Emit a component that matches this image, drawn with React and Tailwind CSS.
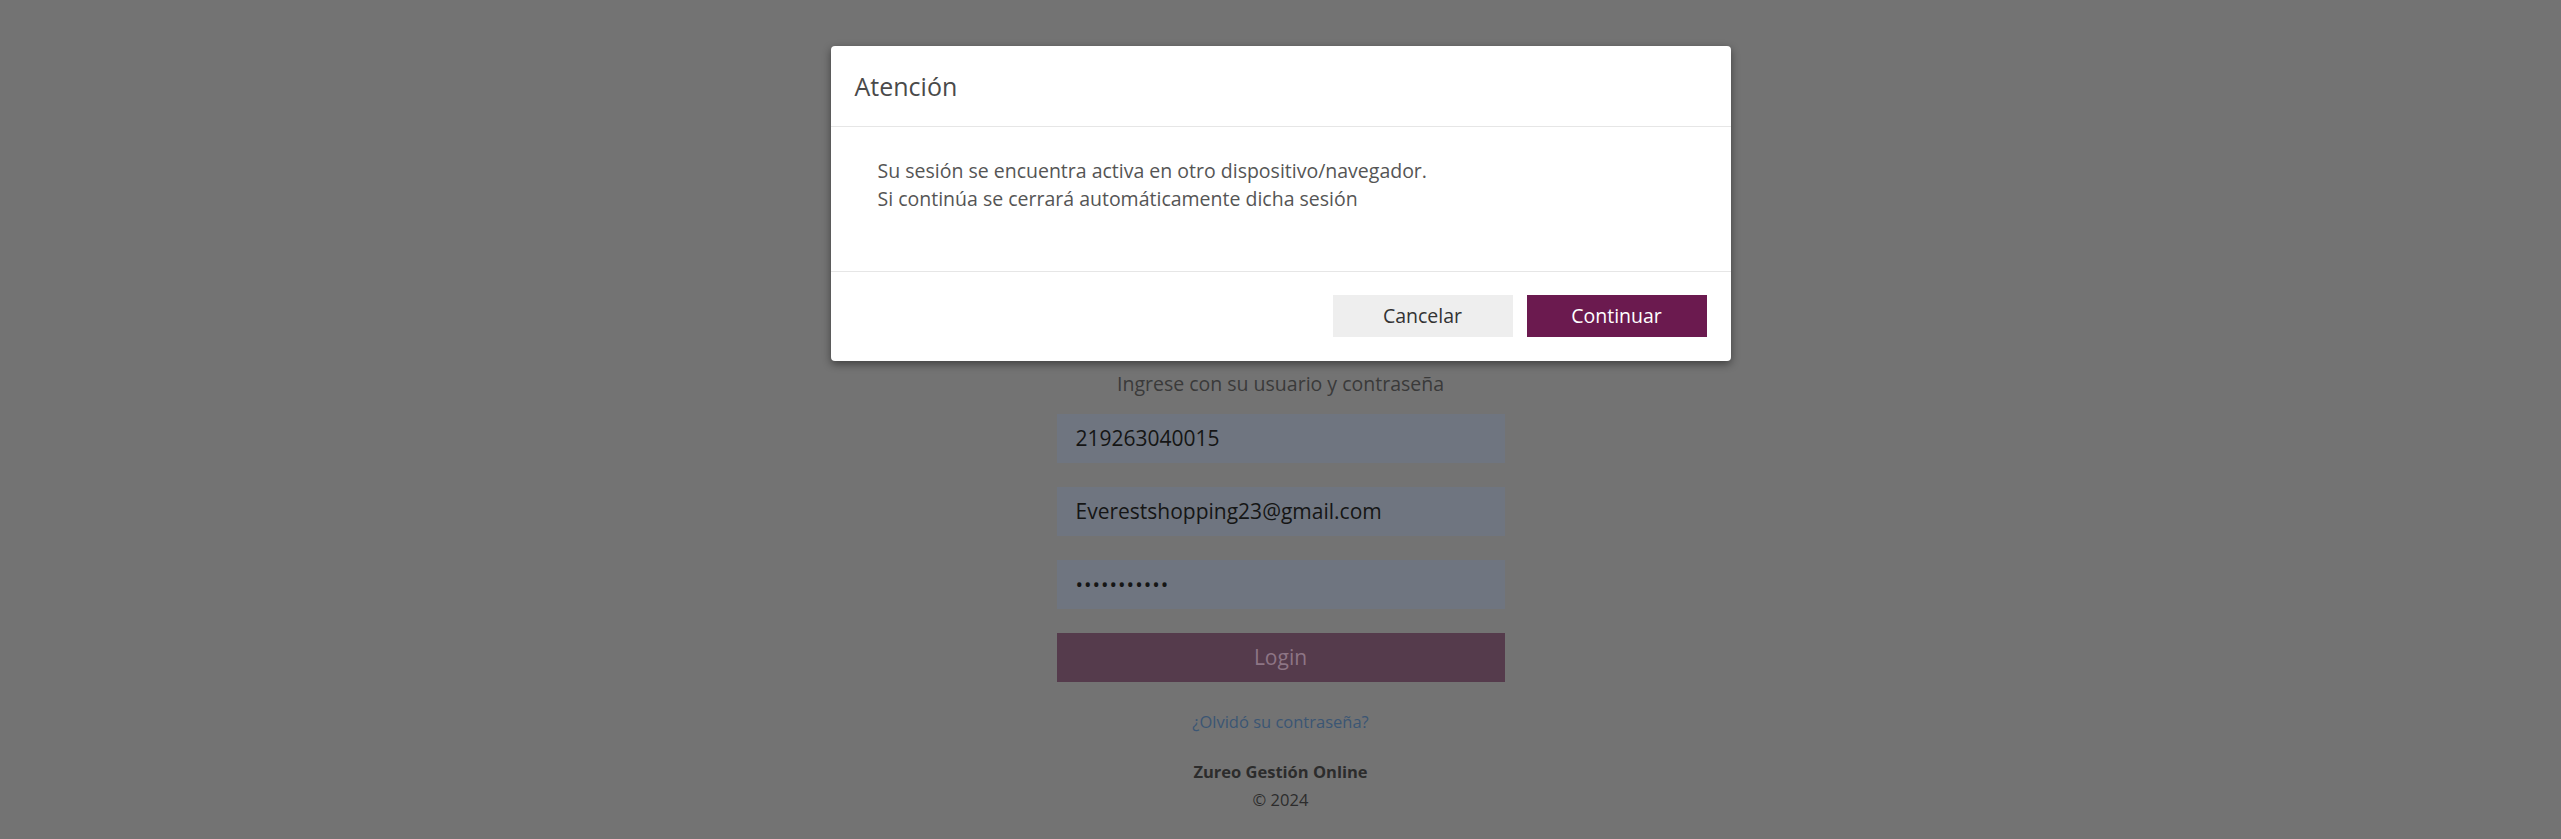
import React from 'react';

function LoginForm() {
  return (
    <div className="w-[448px] flex flex-col items-center pt-[371px]">
      <p className="text-[19.5px] leading-[26px] text-[#3a3a3a]">Ingrese con su usuario y contraseña</p>

      <div className="w-full mt-[17px] flex flex-col gap-[24px]">
        <div className="h-[49px] bg-[#6f7580] px-[19px] flex items-center text-[21px] text-[#151515]">219263040015</div>
        <div className="h-[49px] bg-[#6f7580] px-[19px] flex items-center text-[21px] text-[#151515]">Everestshopping23@gmail.com</div>
        <div className="h-[49px] bg-[#6f7580] px-[19px] flex items-center text-[20px] text-[#151515] tracking-[1px]">•••••••••••</div>
        <button className="h-[49px] bg-[#553b4c] text-[#8d7585] text-[21px]">Login</button>
      </div>

      <a className="mt-[29px] text-[16.5px] leading-[22px] text-[#3b5674]">¿Olvidó su contraseña?</a>
      <p className="mt-[28px] text-[16.5px] leading-[22px] font-bold text-[#2c2c2c]">Zureo Gestión Online</p>
      <p className="mt-[6px] text-[16.5px] leading-[22px] text-[#2c2c2c]">© 2024</p>
    </div>
  );
}

function SessionModal() {
  return (
    <div className="absolute top-[46px] left-1/2 -translate-x-1/2 w-[900px] bg-white rounded-[4px] shadow-[0_3px_8px_rgba(0,0,0,0.45)]">
      <div className="h-[81px] px-[24px] pt-[2px] flex items-center border-b border-[#e6e6e6]">
        <h3 className="text-[25px] text-[#4a4a4a]">Atención</h3>
      </div>
      <div className="pl-[47px] pr-[24px] pt-[30px] pb-[58px] text-[19.5px] leading-[28px] text-[#555]">
        <p>Su sesión se encuentra activa en otro dispositivo/navegador.</p>
        <p>Si continúa se cerrará automáticamente dicha sesión</p>
      </div>
      <div className="border-t border-[#e6e6e6] px-[24px] pt-[23px] pb-[24px] flex justify-end gap-[14px]">
        <button className="w-[180px] h-[42px] bg-[#eeeeee] text-[#333] text-[19.5px]">Cancelar</button>
        <button className="w-[180px] h-[42px] bg-[#6b1a4f] text-white text-[19.5px]">Continuar</button>
      </div>
    </div>
  );
}

export default function App() {
  return (
    <div className="relative min-h-screen h-[839px] overflow-hidden bg-[#737373] flex justify-center" style={{ fontFamily: '"Open Sans", sans-serif' }}>
      <LoginForm />
      <SessionModal />
    </div>
  );
}
